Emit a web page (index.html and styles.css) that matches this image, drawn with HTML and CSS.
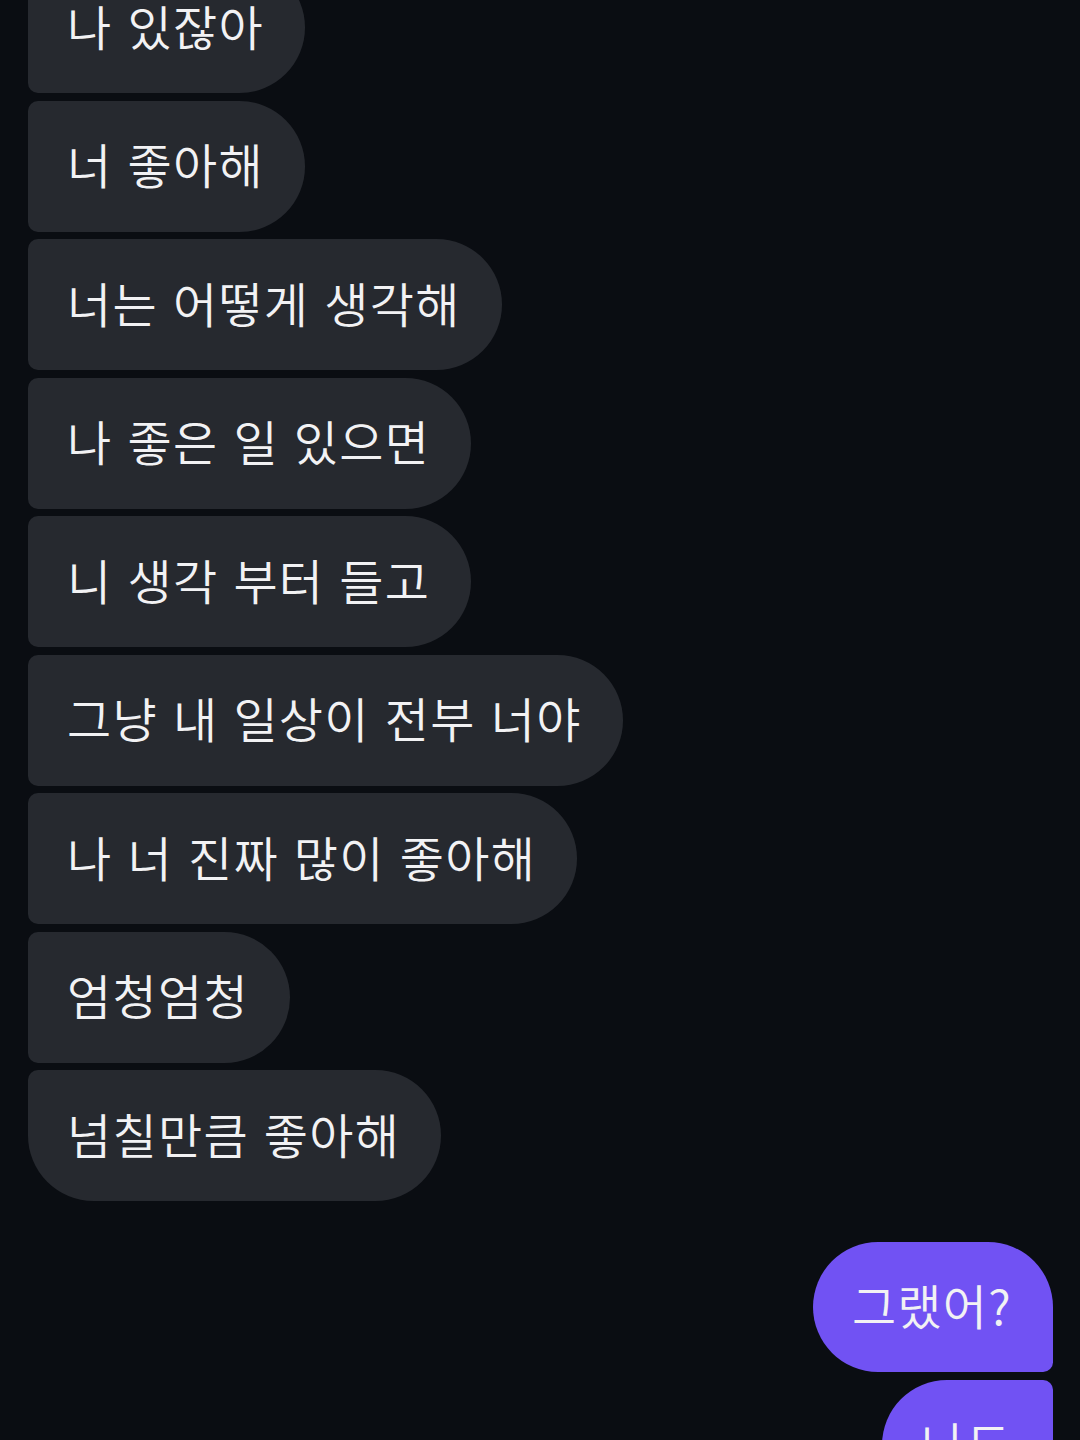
FILE: index.html
```html
<!DOCTYPE html>
<html>

<head>
    <title>
        chat
    </title>
    <link rel="stylesheet" href="styles.css">
</head>

<body>
    <div class="chat">
        <div class="group received">
            <div class="bubble first">나 있잖아</div>
            <div class="bubble">너 좋아해</div>
            <div class="bubble">너는 어떻게 생각해</div>
            <div class="bubble">나 좋은 일 있으면</div>
            <div class="bubble">니 생각 부터 들고</div>
            <div class="bubble">그냥 내 일상이 전부 너야</div>
            <div class="bubble">나 너 진짜 많이 좋아해</div>
            <div class="bubble">엄청엄청</div>
            <div class="bubble last">넘칠만큼 좋아해</div>
        </div>
        <div class="group sent">
            <div class="bubble first">그랬어?</div>
            <div class="bubble">나도</div>
        </div>
    </div>
</body>
</html>
```

FILE: styles.css
```css
body {
    margin: 0;
    background-color: #0a0d12;
    font-family: "Noto Sans CJK KR", "Noto Sans", sans-serif;
    overflow: hidden;
}

.chat {
    display: flex;
    flex-direction: column;
    gap: 41px;
    padding: 0 27px 0 28px;
    margin-top: -38px;
}

.group {
    display: flex;
    flex-direction: column;
    gap: 7.5px;
}

.received {
    align-items: flex-start;
}

.sent {
    align-items: flex-end;
}

.bubble {
    box-sizing: border-box;
    height: 131px;
    padding: 0 41px 6px 39px;
    display: flex;
    align-items: center;
    color: #f2f2f4;
    font-size: 48px;
    font-weight: 350;
    letter-spacing: 1.3px;
    word-spacing: 3px;
    white-space: nowrap;
}

.received .bubble {
    background-color: #26292f;
    border-radius: 10px 66px 66px 10px;
}

.received .bubble.last {
    border-radius: 10px 66px 66px 66px;
}

.sent .bubble {
    background-color: #7152f3;
    border-radius: 66px 10px 10px 66px;
    height: 130px;
}

.sent .bubble.first {
    border-radius: 66px 66px 10px 66px;
}
```
